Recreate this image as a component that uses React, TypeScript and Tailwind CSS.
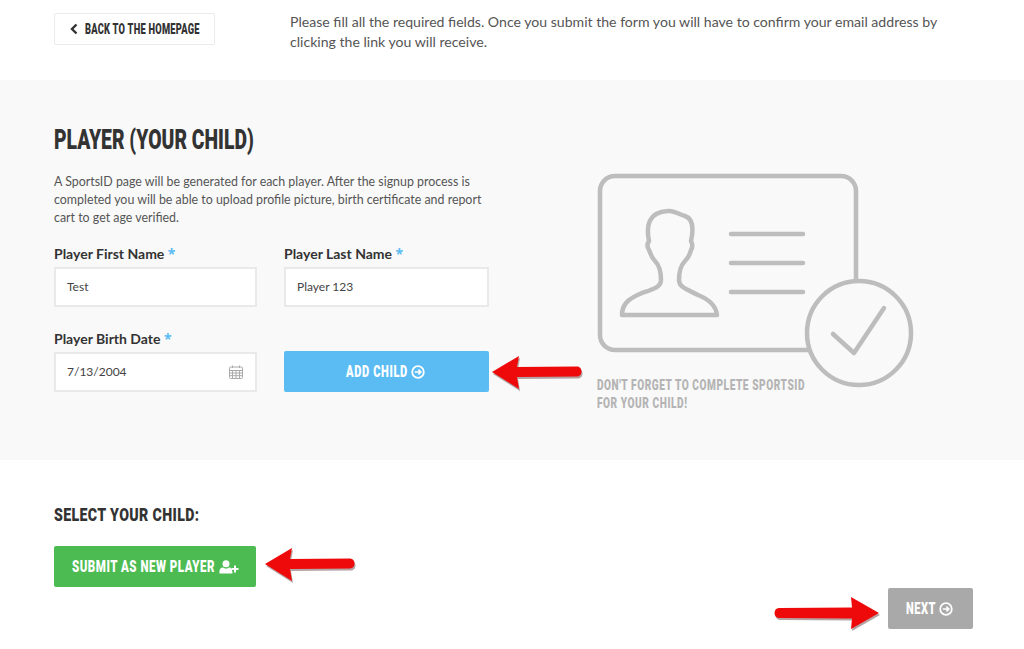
import React from "react";

function Arrow({ className, viewBox, d }: { className: string; viewBox: string; d: string }) {
  return (
    <svg className={className} viewBox={viewBox} fill="none">
      <path d={d} transform="translate(1 2)" fill="#7a5a5a" opacity="0.55" />
      <path d={d} fill="#ee0a0a" />
    </svg>
  );
}

const leftArrow = "M1 17L28 1L26 12L86 11.5C92 11.5 92 21.5 86 21.5L26 22L28 34Z";
const rightArrow = "M106 17L78 1L79 11.5L6 12C0 12 0 22 6 22L79 22.5L78 33Z";

function Circle({ size = 14 }: { size?: number }) {
  return (
    <svg width={size} height={size} viewBox="0 0 14 14" fill="none" stroke="currentColor" className="shrink-0">
      <circle cx="7" cy="7" r="5.8" strokeWidth="1.8" />
      <path d="M3.8 7H9.6M7.4 4.6L9.8 7L7.4 9.4" strokeWidth="1.7" />
    </svg>
  );
}

export default function App() {
  return (
    <div className="relative h-[649px] w-[1024px] overflow-hidden bg-white font-['Lato',sans-serif] text-[#444]">
      <header className="flex h-[80px] px-[54px] pt-[13px]">
        <a className="flex h-[32px] w-[161px] items-center rounded-[2px] border border-[#ebebeb] pl-[15px] text-[#333]">
          <svg width="8" height="12" viewBox="0 0 8 12" fill="none" stroke="currentColor" strokeWidth="2.4" className="mr-[7px]">
            <path d="M6.5 1.5L2 6L6.5 10.5" />
          </svg>
          <span className="w-[116px] origin-left scale-x-[0.62] whitespace-nowrap font-['Roboto',sans-serif] text-[15px] font-black leading-none tracking-[0.4px]">
            BACK TO THE HOMEPAGE
          </span>
        </a>
        <p className="-mt-[1px] ml-[75px] w-[660px] text-[14.1px] leading-[20px] text-[#555]">
          Please fill all the required fields. Once you submit the form you will have to confirm your email address by clicking the link you will receive.
        </p>
      </header>

      <section className="flex h-[380px] bg-[#f9f9f9] pl-[54px]">
        <div className="w-[435px] pt-[45px]">
          <h1 className="h-[30px] w-[200px] origin-left scale-x-[0.69] whitespace-nowrap font-['Roboto',sans-serif] text-[28px] font-black leading-[30px] text-[#333]">
            PLAYER (YOUR CHILD)
          </h1>
          <p className="mt-[18px] w-[435px] text-[12.4px] leading-[18px] text-[#555]">
            A SportsID page will be generated for each player. After the signup process is completed you will be able to upload profile picture, birth certificate and report cart to get age verified.
          </p>
          <div className="mt-[17px] grid grid-cols-[203px_205px] gap-x-[27px]">
            <Field label="Player First Name" value="Test" />
            <Field label="Player Last Name" value="Player 123" />
            <div className="mt-[22px]">
              <Field
                label="Player Birth Date"
                value="7/13/2004"
                icon={
                  <svg width="14" height="14" viewBox="0 0 14 14" fill="none" stroke="#aaa" strokeWidth="1">
                    <rect x="0.5" y="2" width="13" height="11.5" rx="1" />
                    <path d="M0.5 5.5H13.5M0.5 8H13.5M0.5 10.7H13.5M3.5 5.5V13.5M7 5.5V13.5M10.5 5.5V13.5M3.5 0.5V3M10.5 0.5V3" />
                  </svg>
                }
              />
            </div>
            <div className="mt-[22px] flex items-end">
              <button className="flex h-[41px] w-[205px] items-center rounded-[2px] bg-[#5bbcf4] pl-[62px] text-white">
                <span className="w-[62px] origin-left scale-x-[0.65] whitespace-nowrap font-['Roboto',sans-serif] text-[17px] font-black leading-none tracking-[1px]">
                  ADD CHILD
                </span>
                <span className="ml-[3px]"><Circle /></span>
              </button>
            </div>
          </div>
        </div>
        <div className="ml-[108px] pt-[92px]">
          <svg width="320" height="218" viewBox="597 172 320 218" fill="none" stroke="#bdbdbd" strokeWidth="4.5" strokeLinecap="round" strokeLinejoin="round">
            <rect x="600" y="176" width="256" height="174" rx="15" />
            <path d="M731 234H803M731 263H803M731 292H803" />
            <path d="M622 315C622 303 630 298 642 293C654 289 661 287 661 280C661 272 660 266 655 261C651 257 651 254 649 250C647 247 647 244 649 241C646 226 648 212 668 211C674 210 680 215 685 216C694 219 693 232 691 241C693 245 693 247 691 250C690 254 689 257 685 261C680 266 679 272 679 280C679 287 686 289 698 295C708 299 716 305 717 315Z" />
            <circle cx="859" cy="333" r="52" fill="#f9f9f9" />
            <path d="M833 334L854 353L884 308" />
          </svg>
          <p className="-mt-[14px] w-[209px] whitespace-nowrap font-['Roboto',sans-serif] text-[15px] font-black leading-[18px] tracking-[0.8px] text-[#b4b4b4]">
            <span className="block w-[209px] origin-left scale-x-[0.675]">DON'T FORGET TO COMPLETE SPORTSID</span>
            <span className="block w-[90px] origin-left scale-x-[0.675]">FOR YOUR CHILD!</span>
          </p>
        </div>
      </section>

      <section className="flex flex-col px-[54px] pt-[44px]">
        <h2 className="h-[22px] w-[146px] origin-left scale-x-[0.745] whitespace-nowrap font-['Roboto',sans-serif] text-[19px] font-black leading-[22px] tracking-[0.5px] text-[#333]">
          SELECT YOUR CHILD:
        </h2>
        <button className="mt-[20px] flex h-[41px] w-[202px] items-center rounded-[2px] bg-[#4cbb52] pl-[18px] text-white">
          <span className="w-[143px] origin-left scale-x-[0.68] whitespace-nowrap font-['Roboto',sans-serif] text-[17px] font-black leading-none tracking-[0.7px]">
            SUBMIT AS NEW PLAYER
          </span>
          <svg width="20" height="14" viewBox="0 0 20 14" fill="currentColor" className="ml-[4px]">
            <circle cx="7" cy="3.7" r="3.5" />
            <path d="M0.5 13.5C0 9 2 7.5 4 7.5C6 9 8 9 10 7.5C12 7.5 13.5 9 13.5 13.5Z" />
            <path d="M15 5.5H17V8H19.5V10H17V12.5H15V10H12.5V8H15Z" />
          </svg>
        </button>
        <div className="-mr-[3px] mt-[1px] flex justify-end">
          <button className="flex h-[41px] w-[85px] items-center rounded-[2px] bg-[#a9a9a9] pl-[18px] text-white">
            <span className="w-[30px] origin-left scale-x-[0.65] whitespace-nowrap font-['Roboto',sans-serif] text-[17px] font-black leading-none tracking-[0.8px]">
              NEXT
            </span>
            <span className="ml-[3px]"><Circle /></span>
          </button>
        </div>
      </section>

      <Arrow className="absolute left-[491px] top-[355px] h-[36px] w-[92px]" viewBox="0 0 92 36" d={leftArrow} />
      <Arrow className="absolute left-[264px] top-[547px] h-[36px] w-[92px]" viewBox="0 0 92 36" d={leftArrow} />
      <Arrow className="absolute left-[773px] top-[596px] h-[36px] w-[107px]" viewBox="0 0 107 36" d={rightArrow} />
    </div>
  );
}

function Field({ label, value, icon }: { label: string; value: string; icon?: React.ReactNode }) {
  return (
    <label className="block">
      <span className="block h-[20px] whitespace-nowrap text-[14px] font-bold leading-[20px] text-[#333]">
        {label} <span className="font-['Noto_Sans',sans-serif] text-[#5bbcf4]">*</span>
      </span>
      <span className="mt-[3px] flex h-[40px] items-center justify-between border-2 border-[#e9e9e9] bg-white pl-[11px] pr-[12px] text-[12px] text-[#444]">
        {value}
        {icon}
      </span>
    </label>
  );
}
